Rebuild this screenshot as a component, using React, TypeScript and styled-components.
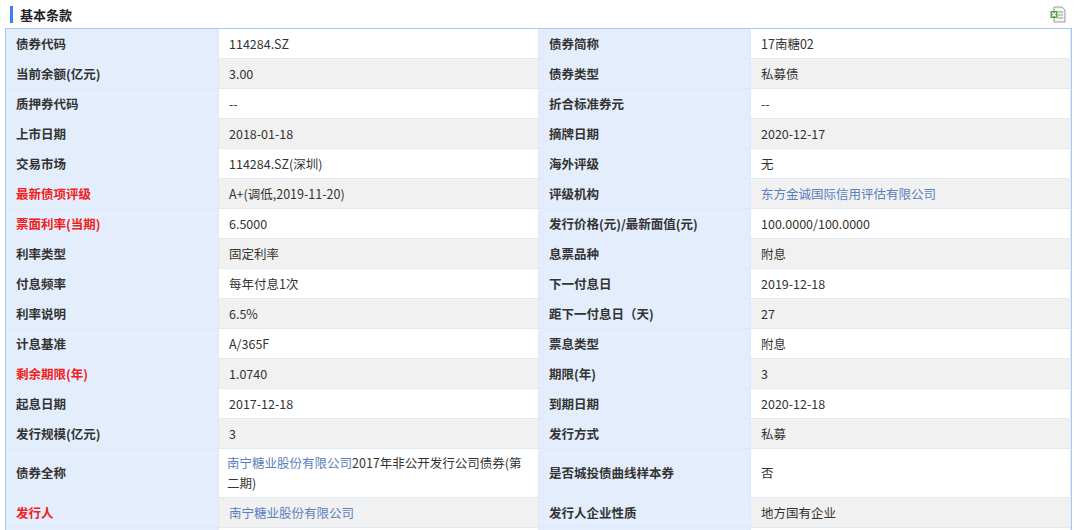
import React from "react";
import styled, { createGlobalStyle } from "styled-components";

const G = createGlobalStyle`
  body { margin: 0; background: #fff; font-family: "Noto Sans CJK SC", "Noto Sans", sans-serif; }
`;

const Page = styled.div`
  padding: 0 8px 0 5px;
  width: 1067px;
`;
const Head = styled.div`
  height: 28px;
  display: flex;
  align-items: center;
  justify-content: space-between;
`;
const Title = styled.div`
  display: flex;
  align-items: center;
  gap: 7px;
  font-size: 13px;
  font-weight: bold;
  color: #222;
  padding-left: 5px;
  &::before {
    content: "";
    width: 3px;
    height: 17px;
    background: #3d7ff0;
  }
`;
const Table = styled.div`
  display: grid;
  grid-template-columns: 213px 320px 212px 1fr;
  border: 1px solid #a9c8f3;
  border-bottom: none;
`;
const Cell = styled.div<{ $label?: boolean; $alt?: boolean; $red?: boolean; $tall?: boolean }>`
  min-height: 29px;
  display: flex;
  align-items: center;
  padding: ${(p) => (p.$tall ? "4px 8px" : "0 10px")};
  font-size: 12.5px;
  line-height: ${(p) => (p.$tall ? "20px" : "24px")};
  border-bottom: 1px solid #dfe9f7;
  border-right: 1px solid #dfe9f7;
  background: ${(p) => (p.$label ? "#e3edfb" : p.$alt ? "#f1f1f1" : "#fff")};
  color: ${(p) => (p.$red ? "#f02020" : "#333")};
  font-weight: ${(p) => (p.$label ? "bold" : "normal")};
`;
const Link = styled.span`
  color: #5b7fc0;
`;

type R = [string, React.ReactNode, string, React.ReactNode, boolean?];
const rows: R[] = [
  ["债券代码", "114284.SZ", "债券简称", "17南糖02"],
  ["当前余额(亿元)", "3.00", "债券类型", "私募债"],
  ["质押券代码", "--", "折合标准券元", "--"],
  ["上市日期", "2018-01-18", "摘牌日期", "2020-12-17"],
  ["交易市场", "114284.SZ(深圳)", "海外评级", "无"],
  ["*最新债项评级", "A+(调低,2019-11-20)", "评级机构", <Link>东方金诚国际信用评估有限公司</Link>],
  ["*票面利率(当期)", "6.5000", "发行价格(元)/最新面值(元)", "100.0000/100.0000"],
  ["利率类型", "固定利率", "息票品种", "附息"],
  ["付息频率", "每年付息1次", "下一付息日", "2019-12-18"],
  ["利率说明", "6.5%", "距下一付息日（天)", "27"],
  ["计息基准", "A/365F", "票息类型", "附息"],
  ["*剩余期限(年)", "1.0740", "期限(年)", "3"],
  ["起息日期", "2017-12-18", "到期日期", "2020-12-18"],
  ["发行规模(亿元)", "3", "发行方式", "私募"],
  ["债券全称", <span><Link>南宁糖业股份有限公司</Link>2017年非公开发行公司债券(第二期)</span>, "是否城投债曲线样本券", "否", true],
  ["*发行人", <Link>南宁糖业股份有限公司</Link>, "发行人企业性质", "地方国有企业"],
  ["", "", "", ""],
];

const XlsIcon = () => (
  <svg width="16" height="17" viewBox="0 0 16 17" style={{ marginRight: 6 }}>
    <path d="M4 1h8l3 3v12H4z" fill="#f4f4f4" stroke="#9a9a9a" />
    <path d="M8 6h5M8 9h5M8 12h5" stroke="#9a9a9a" />
    <rect x="0.5" y="5" width="7" height="7" fill="#4aa336" />
    <path d="M2 6.5l4 4M6 6.5l-4 4" stroke="#fff" strokeWidth="1.2" />
  </svg>
);

export default function App() {
  return (
    <Page>
      <G />
      <Head>
        <Title>基本条款</Title>
        <XlsIcon />
      </Head>
      <Table>
        {rows.map((r, i) => {
          const alt = i % 2 === 1;
          const red = typeof r[0] === "string" && r[0].startsWith("*");
          const lbl = red ? (r[0] as string).slice(1) : r[0];
          return (
            <React.Fragment key={i}>
              <Cell $label $red={red}>{lbl}</Cell>
              <Cell $alt={alt} $tall={r[4]}>{r[1]}</Cell>
              <Cell $label>{r[2]}</Cell>
              <Cell $alt={alt}>{r[3]}</Cell>
            </React.Fragment>
          );
        })}
      </Table>
    </Page>
  );
}
